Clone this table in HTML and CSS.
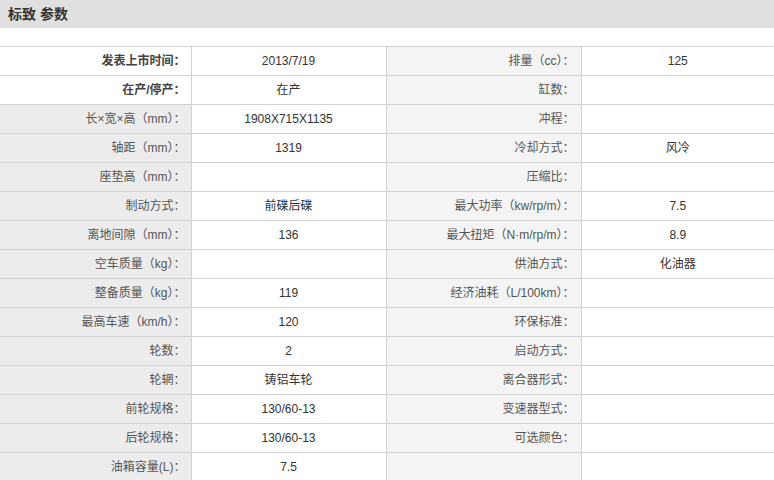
FILE: index.html
```html
<!DOCTYPE html>
<html lang="zh-CN">
<head>
<meta charset="utf-8">
<title>标致 参数</title>
<link rel="stylesheet" href="styles.css">
</head>
<body>
<div class="header"><h2 class="title">标致 参数</h2></div>
<table class="params">
  <colgroup>
    <col class="c1"><col class="c2"><col class="c3"><col class="c4">
  </colgroup>
  <tbody>
    <tr><th class="lab strong">发表上市时间：</th><td>2013/7/19</td><th class="lab alt">排量（cc）：</th><td>125</td></tr>
    <tr><th class="lab strong">在产/停产：</th><td>在产</td><th class="lab alt">缸数：</th><td></td></tr>
    <tr><th class="lab">长×宽×高（mm）：</th><td>1908X715X1135</td><th class="lab alt">冲程：</th><td></td></tr>
    <tr><th class="lab">轴距（mm）：</th><td>1319</td><th class="lab alt">冷却方式：</th><td>风冷</td></tr>
    <tr><th class="lab">座垫高（mm）：</th><td></td><th class="lab alt">压缩比：</th><td></td></tr>
    <tr><th class="lab">制动方式：</th><td>前碟后碟</td><th class="lab alt">最大功率（kw/rp/m）：</th><td>7.5</td></tr>
    <tr><th class="lab">离地间隙（mm）：</th><td>136</td><th class="lab alt">最大扭矩（N·m/rp/m）：</th><td>8.9</td></tr>
    <tr><th class="lab">空车质量（kg）：</th><td></td><th class="lab alt">供油方式：</th><td>化油器</td></tr>
    <tr><th class="lab">整备质量（kg）：</th><td>119</td><th class="lab alt">经济油耗（L/100km）：</th><td></td></tr>
    <tr><th class="lab">最高车速（km/h）：</th><td>120</td><th class="lab alt">环保标准：</th><td></td></tr>
    <tr><th class="lab">轮数：</th><td>2</td><th class="lab alt">启动方式：</th><td></td></tr>
    <tr><th class="lab">轮辋：</th><td>铸铝车轮</td><th class="lab alt">离合器形式：</th><td></td></tr>
    <tr><th class="lab">前轮规格：</th><td>130/60-13</td><th class="lab alt">变速器型式：</th><td></td></tr>
    <tr><th class="lab">后轮规格：</th><td>130/60-13</td><th class="lab alt">可选颜色：</th><td></td></tr>
    <tr><th class="lab">油箱容量(L)：</th><td>7.5</td><th class="lab alt"></th><td></td></tr>
  </tbody>
</table>
</body>
</html>
```

FILE: styles.css
```css
html, body {
  margin: 0;
  padding: 0;
  background: #fff;
  font-family: "Liberation Sans", "Noto Sans CJK SC", sans-serif;
  font-size: 12px;
  color: #333;
}

.header {
  height: 28px;
  background: #e0e0e0;
  display: flex;
  align-items: center;
  padding-left: 8px;
}

.title {
  margin: 0;
  font-size: 14px;
  font-weight: bold;
  color: #333;
  line-height: 28px;
}

.params {
  margin-top: 18px;
  width: 774px;
  border-collapse: collapse;
  table-layout: fixed;
}

.c1 { width: 191px; }
.c2 { width: 195px; }
.c3 { width: 195px; }
.c4 { width: 193px; }

.params th,
.params td {
  height: 28px;
  padding: 0;
  border: 1px solid #d2d2d2;
  font-size: 12px;
  line-height: 28px;
  white-space: nowrap;
  overflow: hidden;
}

.params tr > *:first-child { border-left: none; }
.params tr > *:last-child { border-right: none; }

.params td {
  text-align: center;
  color: #333;
  background: #fff;
}

.lab {
  text-align: right;
  padding-right: 5px !important;
  font-weight: normal;
  color: #555;
  background: #ececec;
}

.lab.strong {
  font-weight: bold;
  color: #444;
  background: #fff;
}

.lab.alt {
  background: #f4f4f4;
  padding-right: 6px !important;
}
```
